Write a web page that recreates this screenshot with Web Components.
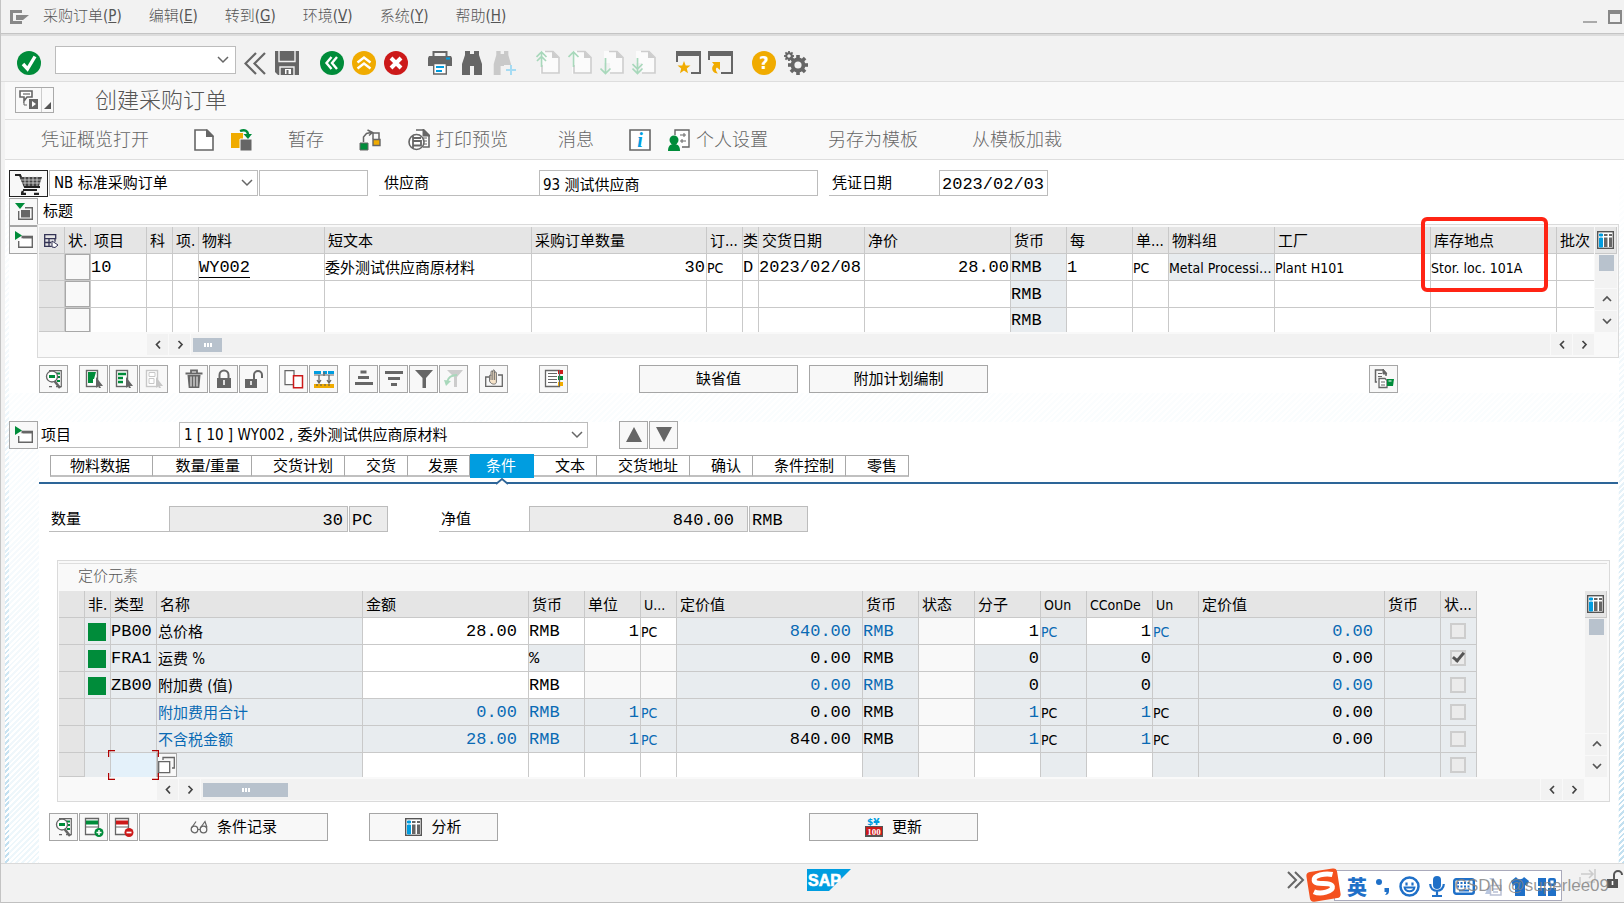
<!DOCTYPE html>
<html lang="zh-CN">
<head>
<meta charset="utf-8">
<title>创建采购订单</title>
<style>
html,body{margin:0;background:#f2f2f2}
body{
  --latin:"DejaVu Sans Condensed","Noto Sans","Noto Sans CJK SC",sans-serif;
  --mono:"Liberation Mono","Noto Sans CJK SC",monospace;
  --line:#c9c9c9;--edge:#a6a6a6;--head:#e5e5e5;--ro:#e8ecef;--blue:#0a6ab4;
  font:15px/20px var(--latin);color:#000
}
</style>
</head>
<body>
<sap-app></sap-app>
<script>
const G='#666', GR='#008c3a', OR='#f0ab00', BL='#009de0', RD='#cc1919';
const page=(c)=>`<path d="M4 1h12l7 7v16H4z" fill="#fbfbfb"/><path d="M9 1.5H17l6 6V23H6V15" fill="none" stroke="${c}" stroke-width="1.6"/><path d="M16 1l7 7h-7z" fill="${c}"/>`;
const binos=(c)=>`<path d="M5 0h5v3h4V0h5v4l3 9v11h-8v-9h-4v9H2V13l3-9z" fill="${c}"/>`;
const gear=(x,y,r,n,w)=>{let s='';for(let i=0;i<n;i++)s+=`<rect x="${x-w/2}" y="${y-r}" width="${w}" height="${r*0.6}" transform="rotate(${i*360/n} ${x} ${y})"/>`;return `<g fill="${G}">${s}</g><circle cx="${x}" cy="${y}" r="${r*0.55}" fill="none" stroke="${G}" stroke-width="${r*0.38}"/>`};
const sheet=(c)=>`<rect x="2.5" y="1.5" width="11" height="16" fill="#fff" stroke="${c}" stroke-width="1.4"/>`;
const cursor=(c)=>`<path d="M12 8l7 9-3 0 1 2-2 0-1-2-2 2z" fill="${c}"/>`;
const grid=`<rect x=".7" y=".7" width="15.6" height="16.6" fill="#fff" stroke="#555" stroke-width="1.4"/><path d="M2.500 3h3v2h-3zM2.500 7h3v9h-3z" fill="${BL}" stroke="${BL}"/><path d="M7 3h3.500v2H7zM12 3h3v2h-3zM7 6.500h3.500V16H7zM12 6.500h3V16h-3z" fill="${G}"/>`;
const loupe=`<path d="M5 1.700h12.300v16H12M5 17.700h3" fill="none" stroke="${G}" stroke-width="1.200"/><path d="M12 4.500h4M12 8h4M13 12h3" stroke="${GR}" stroke-width="2"/><circle cx="8" cy="7.500" r="5.500" fill="#fff" stroke="${G}" stroke-width="1.300"/><path d="M5 7.500h6" stroke="${GR}" stroke-width="3"/><path d="M10.500 12l5.500 7" stroke="${G}" stroke-width="2.600"/>`;
const ICONS={
 menu:[20,14,`<path d="M12 1.500H1.500v11H12" fill="none" stroke="#888" stroke-width="3"/><path d="M6 5h13l-6 5H6z" fill="#888"/>`],
 ok:[24,24,`<circle cx="12" cy="12" r="12" fill="${GR}"/><path d="M6 13l4.500 5L18 5.500" fill="none" stroke="#fff" stroke-width="3.400"/>`],
 chev:[12,8,`<path d="M1 1l5 5 5-5" fill="none" stroke="${G}" stroke-width="1.500"/>`],
 dbl:[24,24,`<path d="M12 2L1.500 12.500 12 23M21 2L10.500 12.500 21 23" fill="none" stroke="${G}" stroke-width="2.200"/>`],
 save:[24,24,`<path d="M0 0h24v24H3l-3-3z" fill="${G}"/><path d="M4 0v10.500h16V0M5 24v-8h14v8" fill="none" stroke="#f2f2f2" stroke-width="1.400"/><path d="M10 18h6v5h-6z" fill="#fff"/><path d="M11.500 19h2v4h-2z" fill="${G}"/>`],
 back:[24,24,`<circle cx="12" cy="12" r="12" fill="${GR}"/><path d="M11.500 6L6.500 12l5 6M17 6l-5 6 5 6" fill="none" stroke="#fff" stroke-width="2.400"/>`],
 up:[24,24,`<circle cx="12" cy="12" r="12" fill="${OR}"/><path d="M5.500 11.500l6.500-5 6.500 5M5.500 17.500l6.500-5 6.500 5" fill="none" stroke="#fff" stroke-width="2.400"/>`],
 stop:[24,24,`<circle cx="12" cy="12" r="12" fill="${RD}"/><path d="M7 7l10 10M17 7L7 17" stroke="#fff" stroke-width="4"/>`],
 print:[24,24,`<path d="M5.500 5V1h13v4" fill="none" stroke="${G}" stroke-width="2"/><path d="M1 5h22l1 2v8h-5v-3H5v3H0V7z" fill="${G}"/><path d="M18 7.500h4" stroke="${BL}" stroke-width="2"/><path d="M5.700 12.500h12.600V23H5.700z" fill="#fff" stroke="${G}" stroke-width="1.400"/><path d="M8 16h8M8 20h6" stroke="${BL}" stroke-width="2"/>`],
 find:[24,24,binos(G)],
 findnext:[26,24,`<g transform="scale(.86 1)">${binos('#c9c9c9')}</g><path d="M12 14h14v10H12z" fill="#f2f2f2"/><path d="M19 14v10M14 19h10" stroke="#a5dbf3" stroke-width="2"/>`],
 first:[24,25,page('#cdcdcd')+`<path d="M5.500 2v15M.500 7l5-5 5 5M1 11l4.500-4.500L10 11" fill="none" stroke="#a8d8bb" stroke-width="1.700"/>`],
 prev:[24,25,page('#cdcdcd')+`<path d="M5.500 1.500V17M.500 7l5-5 5 5" fill="none" stroke="#a8d8bb" stroke-width="1.700"/>`],
 next:[24,25,page('#cdcdcd')+`<path d="M1 13h9v12H1z" fill="#f2f2f2"/><path d="M5.500 8v15.500M.500 18.500l5 5 5-5" fill="none" stroke="#a8d8bb" stroke-width="1.700"/>`],
 last:[24,25,page('#cdcdcd')+`<path d="M1 13h9v12H1z" fill="#f2f2f2"/><path d="M5.500 8v15.500M.500 18.500l5 5 5-5M.500 14l5 5 5-5" fill="none" stroke="#a8d8bb" stroke-width="1.700"/>`],
 newwin:[25,25,`<path d="M0 1h25v5H0z" fill="${G}"/><path d="M1 5v7M24 5v18H15" fill="none" stroke="${G}" stroke-width="2"/><path d="M8 11l1.700 4.400 4.800.200-3.700 3 1.200 4.600L8 20.600l-4 2.600 1.200-4.600-3.700-3 4.800-.200z" fill="${OR}"/>`],
 shortcut:[25,25,`<path d="M0 1h25v5H0z" fill="${G}"/><path d="M1 5v5M24 5v18H13" fill="none" stroke="${G}" stroke-width="2"/><path d="M4 12h8v8l-3-2.500c-2 1-1 4 1 6-5 0-8-5-4-9z" fill="${OR}"/>`],
 help:[24,24,`<circle cx="12" cy="12" r="12" fill="${OR}"/><text x="12" y="18" text-anchor="middle" font-family="DejaVu Sans" font-weight="700" font-size="17" fill="#fff">?</text>`],
 gear:[24,24,gear(14,14,10,8,3.600)+gear(5,5,5,8,1.800)],
 min:[14,14,`<path d="M0 12h14" stroke="#aaa" stroke-width="2"/>`],
 max:[14,14,`<path d="M1 1h12v12H1zM1 3h12" fill="none" stroke="#888" stroke-width="2"/>`],
 service:[20,20,`<path d="M1 2.500V1h12v6H8L5 11 5 7H1z" fill="#fff" stroke="${G}" stroke-width="1.600"/><path d="M4 4h7" stroke="${G}" stroke-width="1.200"/><path d="M10 9h9v10h-9z" fill="${G}"/><path d="M13 11l4 3-4 3z" fill="#fff"/><path d="M5 12v3h3" stroke="${G}" fill="none"/>`],
 corner:[7,7,`<path d="M7 0v7H0z" fill="#555"/>`],
 doc:[20,22,`<path d="M1 1h12l6 6v14H1z" fill="#fff" stroke="${G}" stroke-width="1.600"/><path d="M12 0l8 8h-8z" fill="${G}"/>`],
 copyinto:[22,22,`<path d="M0 4h12v15H0z" fill="${OR}"/><path d="M9 10h12v12H9z" fill="${G}" stroke="#f9f9f9"/><path d="M9 2c5-2 8 0 8 4" fill="none" stroke="${GR}" stroke-width="2.400"/><path d="M12.500 5h8.500l-4 5z" fill="${GR}"/>`],
 check:[22,22,`<path d="M1 14h8v7H1z" fill="${GR}" stroke="${G}"/><path d="M14 10.500h7v6h-7z" fill="${OR}" stroke="${G}" stroke-width="1.400"/><path d="M4.500 13V8L7.500 4.500 12 3.500M8.500 1l5 2.500-3.500 3M14 4h6v6M14 4v6" fill="none" stroke="${G}" stroke-width="1.500"/>`],
 preview:[22,22,`<path d="M8 1h8l5 5v12h-6" fill="#fff" stroke="${G}" stroke-width="1.600"/><path d="M15 0l7 7h-7zM14 9h5M16 12h3M16 15h3" stroke="${G}" fill="${G}"/><circle cx="8.500" cy="13" r="7.500" fill="#fff" stroke="${G}" stroke-width="1.600"/><path d="M5 7v12M5 9h8M5 16.500h8V12H5" fill="none" stroke="${G}" stroke-width="1.800"/>`],
 info:[22,22,`<path d="M1 1h20v20H1z" fill="#fff" stroke="${G}" stroke-width="1.600"/><text x="11" y="18" text-anchor="middle" font-family="Liberation Serif" font-style="italic" font-weight="700" font-size="20" fill="${BL}">i</text>`],
 person:[22,22,`<path d="M7 6V1h14v17h-7" fill="#fff" stroke="${G}" stroke-width="1.400"/><path d="M12 6h6M12 12h6M16 4v4M14 10v4" stroke="${G}"/><circle cx="6" cy="11" r="4.500" fill="${GR}"/><path d="M0 22c0-6 3-7 6-7s6 1 6 7z" fill="${GR}"/>`],
 cart:[28,22,`<path d="M0 2h5l5 12h15M8 17h14" fill="none" stroke="#222" stroke-width="2.200"/><path d="M5 4h22l-3 9H9z" fill="#444"/><path d="M10 3v10M14 3v10M18 3v10M22 3v10M6 7h20M7 10h18" stroke="#ddd" stroke-width=".8"/><path d="M8 18l-1 2M6 21h5M19 21h5" stroke="#222" stroke-width="2.400"/>`],
 fold:[20,20,`<path d="M1 1h10l-5 6z" fill="${GR}"/><path d="M4.700 9v8.300h13.600V5.700H11" fill="none" stroke="${G}" stroke-width="1.400"/><path d="M7 8h9v7.500H7z" fill="${G}"/>`],
 unfold:[20,20,`<path d="M1 1l7 4.500L1 10z" fill="${GR}"/><path d="M4.700 11v6.300h13.600V7.500H9" fill="#fff" stroke="${G}" stroke-width="1.400"/><path d="M7.500 7h11.500" stroke="${G}" stroke-width="2.600"/>`],
 selall:[16,14,`<path d="M.700.700h11v4h-11zM.700 4.700v7.600h7M.700 8.500h6.500M5 4.700v7.600M11 4.700v3" fill="none" stroke="#335" stroke-width="1.300"/><path d="M8 7l6 4-3 2.500-3-.500z" fill="#fff" stroke="#335"/>`],
 grid:[17,18,grid],
 loupe:[20,20,loupe],
 selpage:[20,20,sheet(G)+`<path d="M4 3h8l-2 7H9v4H4z" fill="${GR}"/>`+cursor(G)],
 sellist:[20,20,sheet(G)+`<path d="M4 5h8M4 9h5M4 13h5" stroke="${GR}" stroke-width="2.400"/>`+cursor(G)],
 desel:[20,20,sheet('#c8c8c8')+`<path d="M5 3.500h6v4H5zM5 9.500h5v5H5z" fill="none" stroke="#c8c8c8"/>`+cursor('#c8c8c8')],
 trash:[20,20,`<path d="M1.500 4.500h17M7 4V1.500h6V4" fill="none" stroke="${G}" stroke-width="1.800"/><path d="M3.500 6h13l-1.200 13H4.700z" fill="${G}"/><path d="M7 7.500v10M10 7.500v10M13 7.500v10" stroke="#fff"/>`],
 lock:[20,20,`<path d="M3 9h14v10H3z" fill="${G}"/><path d="M5.500 9V6a4.500 4.500 0 019 0v3" fill="none" stroke="${G}" stroke-width="2"/><path d="M10 11v5" stroke="#fff" stroke-width="1.600"/>`],
 unlock:[20,20,`<path d="M1 10h12v9H1z" fill="${G}"/><path d="M10 10V6a4 4 0 018 0v3" fill="none" stroke="${G}" stroke-width="2"/><path d="M7 12v4" stroke="#fff" stroke-width="1.600"/>`],
 dup:[20,20,`<path d="M1 1.700h9v14H1z" fill="#fff" stroke="${G}" stroke-width="1.200"/><path d="M9.500 6.700h9v12h-9z" fill="#fff" stroke="${RD}" stroke-width="1.500"/>`],
 ruler:[20,20,`<path d="M0 2h7v3H0zM9 2h4v3H9zM14 2h6v3h-6z" fill="${BL}"/><path d="M0 6h20" stroke="${G}"/><path d="M5 6v8M3 11l2 3 2-3M15 6v8M13 11l2 3 2-3M10 3v4" stroke="${G}" fill="none" stroke-width="1.300"/><path d="M0 15h20v4H0z" fill="${OR}"/><path d="M3 15v2M7 15v2M11 15v2M15 15v2" stroke="#555"/>`],
 asc:[20,20,`<path d="M6.500 3h6M4 8.500h11M1 14.500h18" stroke="${G}" stroke-width="3"/>`],
 desc:[20,20,`<path d="M1 3.500h18M4 9.500h12M7 15.500h6" stroke="${G}" stroke-width="3"/>`],
 filter:[20,20,`<path d="M1 1h18l-7 8v10H8.500V9z" fill="${G}"/><path d="M14 8a3 3 0 003-4" stroke="#fff" fill="none"/>`],
 nofilter:[20,20,`<path d="M3 1h16l-6 7v10h-3V8z" fill="#ccc"/><path d="M13 6c-6 0-9 3-10 7" fill="none" stroke="#a8d8bb" stroke-width="2"/><path d="M0 11l7 1-5 5z" fill="#a8d8bb"/>`],
 attach:[20,20,`<path d="M5 8H1.700v9.300h16.600V6H14" fill="none" stroke="${G}" stroke-width="1.300"/><path d="M5.500 12V7c0-1.500 1.500-1.500 1.500 0V3c0-1.500 1.800-1.500 1.800 0V2c0-1.500 1.800-1.500 1.800 0v2c0-1.500 1.800-1.500 1.800 0v9c0 3-5.400 3-6.900-1zM7 7v4M8.800 3v8M10.600 4v7" fill="#f6e3c8" stroke="${G}" stroke-width=".9"/>`],
 book:[20,20,`<path d="M1.500 1.500h14v16h-14z" fill="#fff" stroke="${G}" stroke-width="1.300"/><path d="M4 4.500h9M4 7.500h9M4 10.500h9M4 13.500h9" stroke="${G}"/><path d="M14 1h5v4h-5z" fill="${RD}"/><path d="M14 7h5v4h-5z" fill="${GR}"/><path d="M14 13h5v4h-5z" fill="${OR}"/><path d="M15.500 1v17" stroke="${G}"/>`],
 docs:[20,20,`<path d="M3 13H1.500V1H9l3 3v3" fill="none" stroke="${G}" stroke-width="1.500"/><path d="M4 4.500h4M4 7.500h4" stroke="${G}"/><path d="M5 9.500h6l2 2v7H5z" fill="#fff" stroke="${G}" stroke-width="1.300"/><path d="M7 13h4M7 16h4M9 0l4 5H9z" stroke="${G}" fill="${G}"/><path d="M13 10h7l-1 7h-6z" fill="${GR}"/><path d="M14.500 12h3" stroke="#fff"/>`],
 triup:[18,16,`<path d="M9 0l8 15H1z" fill="${G}"/>`],
 tridown:[18,16,`<path d="M1 0h16L9 15z" fill="${G}"/>`],
 match:[18,18,`<path d="M5 4V1.500h11.300V12H14" fill="none" stroke="${G}" stroke-width="1.300"/><path d="M.700 5.700h11v11H.700z" fill="#fff" stroke="${G}" stroke-width="1.300"/>`],
 rowadd:[20,20,`<path d="M12 17.500H1.500V1.500h13V11" fill="#fff" stroke="${G}" stroke-width="1.300"/><path d="M2 5.500h12" stroke="${GR}" stroke-width="4"/><path d="M2 10h12" stroke="${G}"/><circle cx="15" cy="15.500" r="4.500" fill="${GR}"/><path d="M15 13v5M12.500 15.500h5" stroke="#fff" stroke-width="1.500"/>`],
 rowdel:[20,20,`<path d="M12 17.500H1.500V1.500h13V11" fill="#fff" stroke="${G}" stroke-width="1.300"/><path d="M2 5.500h12" stroke="${RD}" stroke-width="4"/><path d="M2 10h12" stroke="${G}"/><circle cx="15" cy="15.500" r="4.500" fill="${RD}"/><path d="M12.500 15.500h5" stroke="#fff" stroke-width="1.700"/>`],
 glasses:[18,14,`<circle cx="4.500" cy="9.500" r="3.300" fill="none" stroke="${G}" stroke-width="1.300"/><circle cx="13.500" cy="9.500" r="3.300" fill="none" stroke="${G}" stroke-width="1.300"/><path d="M1.500 8L6 1.500M10.300 8L15 1.500l2 6M8 9.500h2" fill="none" stroke="${G}" stroke-width="1.200"/>`],
 price:[18,20,`<text x="2" y="8" font-family="DejaVu Sans" font-weight="700" font-size="9" fill="${BL}">$¥</text><path d="M0 9h18v11H0z" fill="#555"/><path d="M1 10h16v8H1z" fill="${RD}"/><text x="9" y="17.500" text-anchor="middle" font-family="Liberation Serif" font-weight="700" font-size="9" fill="#fff">100</text>`],
 left:[21,21,`<path d="M13 7L9.500 10.500 13 14.500" fill="none" stroke="#444" stroke-width="1.700"/>`],
 right:[21,21,`<path d="M9.500 7l3.500 3.500-3.500 4" fill="none" stroke="#444" stroke-width="1.700"/>`],
 sup:[21,21,`<path d="M7 12l4-4 4 4" fill="none" stroke="#555" stroke-width="1.700"/>`],
 sdown:[21,21,`<path d="M7 8l4 4 4-4" fill="none" stroke="#555" stroke-width="1.700"/>`],
 more:[18,18,`<path d="M1 1l8 8-8 8M8 1l8 8-8 8" fill="none" stroke="${G}" stroke-width="2"/>`],
 sap:[44,22,`<path d="M0 0h44L22 22H0z" fill="${BL}"/><text x="1" y="17" font-family="Liberation Sans" font-weight="700" font-size="16" fill="#fff" stroke="#fff" stroke-width=".6">SAP</text>`],
 sogou:[36,36,`<g transform="rotate(-9 18 18)"><rect x="2" y="3" width="31" height="30" rx="4" fill="#f4511e"/><path d="M28 9c-7-3-19-2-19 3 0 6 17 3 17 9 0 5-13 6-19 2" fill="none" stroke="#fff" stroke-width="5"/></g>`],
 punct:[14,20,`<circle cx="3" cy="5" r="3" fill="#1f70c8"/><path d="M8.500 11h4.500v3c0 3-2 4-4 4 1-1 1.500-2 1.500-3h-2z" fill="#1f70c8"/>`],
 smile:[21,21,`<circle cx="10.500" cy="10.500" r="9" fill="none" stroke="#1f70c8" stroke-width="2.500"/><path d="M7.500 6.500v3M13.500 6.500v3" stroke="#1f70c8" stroke-width="2.200"/><path d="M5.500 11.500c1 5 9 5 10 0z" fill="none" stroke="#1f70c8" stroke-width="1.800"/>`],
 mic:[16,21,`<rect x="4" y="0" width="8" height="13" rx="4" fill="#1f70c8"/><path d="M1.200 8c0 9 13.600 9 13.600 0M8 15v4M3 20h10" fill="none" stroke="#1f70c8" stroke-width="2.200"/>`],
 keys:[22,17,`<rect x="1.200" y="1.200" width="19.600" height="14.600" rx="2" fill="#fff" stroke="#1f70c8" stroke-width="2.400"/><path d="M4 5h14M4 8.500h14" stroke="#1f70c8" stroke-width="2" stroke-dasharray="2 1.500"/><path d="M6 12.500h10" stroke="#1f70c8" stroke-width="2"/>`],
 card:[18,19,`<path d="M5 1l3 3v5h-3l-4 8h9V1z" fill="#b9c6de"/><path d="M6.500 8.500h10.500V18H6.500z" fill="#fff" stroke="#b9c0d4" stroke-width="1.500"/><path d="M9 12h5M9 15h5" stroke="#b9c0d4" stroke-width="1.500"/>`],
 shirt:[18,19,`<path d="M5 0c2 3 6 3 8 0l5 4-2 5-2-1v11H4V8L2 9 0 4z" fill="#1f70c8"/>`],
 apps:[18,19,`<path d="M0 1h8v8H0zM0 11h8v8H0zM10 11h8v8h-8z" fill="#1f70c8"/><rect x="11.200" y="2.200" width="5.600" height="5.600" rx="1" fill="#fff" stroke="#1f70c8" stroke-width="2.400"/>`],
 tab:[17,17,`<path d="M2 5h12M10 1l4 4-4 4M16 0v10M1 8v8M16 13H6" fill="none" stroke="#ccc" stroke-width="1.600"/>`],
 padlock:[18,20,`<path d="M1 10h11v9H1z" fill="#555"/><path d="M8 10V6a4 4 0 018 0" fill="none" stroke="#555" stroke-width="2"/><path d="M6.500 12v4" stroke="#fff" stroke-width="1.600"/>`]
};
const define=(tag,html,after)=>customElements.define(tag,class extends HTMLElement{
  connectedCallback(){
    if(this.shadowRoot)return;
    const root=this.attachShadow({mode:'open'});
    const t=document.createElement('template');
    t.innerHTML=typeof html==='function'?html(this):html;
    root.append(t.content.cloneNode(true));
    if(after)after(this,root);
  }
});
const ico=n=>`<ui-icon name="${n}"></ui-icon>`;

define('ui-icon',el=>{const [w,h,m]=ICONS[el.getAttribute('name')];
  return `<style>:host{display:inline-flex;flex:none}svg{display:block}</style><svg width="${w}" height="${h}" viewBox="0 0 ${w} ${h}" aria-hidden="true">${m}</svg>`});

/* Framed push button, with an icon, a caption or both */
define('push-button',el=>`<style>
:host{display:inline-flex;flex:none;width:29px;height:28px}
button{flex:1;box-sizing:border-box;display:flex;align-items:center;justify-content:center;gap:9px;padding:0;margin:0;border:1px solid var(--edge);background:#f8f8f8;color:#000;font:15px/20px var(--latin)}
:host([dark]) button{border:1px solid #222}
</style><button type="button" aria-label="${el.getAttribute('label')||''}">${el.hasAttribute('icon')?ico(el.getAttribute('icon')):''}<slot></slot></button>`);

/* Flat toolbar button */
define('tool-button',el=>`<style>
:host{display:inline-flex;flex:none}
button{display:flex;align-items:center;gap:6px;padding:0;margin:0;border:0;background:none;color:#666;font:300 18px/24px var(--latin)}
</style><button type="button" aria-label="${el.getAttribute('label')||''}">${el.hasAttribute('icon')?ico(el.getAttribute('icon')):''}<slot></slot></button>`);

/* Underlined label joined to one text box */
define('form-field',el=>{const a=n=>el.getAttribute(n)||'';return `<style>
:host{display:flex;flex:none;height:26px}
label{box-sizing:border-box;width:var(--lw);border-bottom:1px solid #bcbcbc;padding:0 4px 0 var(--lp,5px);line-height:27px;white-space:nowrap}
input{box-sizing:border-box;width:var(--iw);height:26px;margin:0;padding:0 3px;border:1px solid #bcbcbc;background:#fff;color:#000;font:15px/20px var(--latin);border-radius:0}
:host([mono]) input{font:17px/20px var(--mono);padding:2px 2px 0}
:host([ro]) input{background:#ebebeb}
:host([right]) input{text-align:right;padding-right:var(--rp,4px)}
</style>${el.hasAttribute('label')?`<label for="f">${a('label')}</label>`:''}<input id="f" type="text" value="${a('value')}" aria-label="${a('label')||a('name')}" ${el.hasAttribute('ro')?'readonly':''}>`});

define('drop-down',el=>`<style>
:host{display:block;position:relative;flex:none;height:26px}
select{appearance:none;box-sizing:border-box;width:100%;height:26px;margin:0;padding:0 24px 0 4px;border:1px solid #bcbcbc;border-radius:0;background:#fff;color:#000;font:15px/20px var(--latin)}
ui-icon{position:absolute;right:5px;top:9px;pointer-events:none}
</style><select aria-label="${el.getAttribute('label')}"><option>${el.getAttribute('value')}</option></select>${ico('chev')}`);

define('menu-bar',()=>{
  const items=[['采购订单','P'],['编辑','E'],['转到','G'],['环境','V'],['系统','Y'],['帮助','H']];
  return `<style>
:host{display:flex;align-items:center;height:33px;padding:0 2px 0 9px;border-bottom:1px solid #c4c4c4;box-shadow:0 2px #dcdcdc;background:#f2f2f2;margin-bottom:2px}
nav{display:flex;gap:27px;margin:0 0 2px 13px;flex:1}
button{border:0;background:none;padding:0;color:#555;font:300 15px/20px var(--latin);white-space:nowrap}
ui-icon{margin-left:11px}ui-icon:first-of-type{margin-left:0}
</style>${ico('menu')}<nav>${items.map(([t,k])=>`<button type="button">${t}(<u>${k}</u>)</button>`).join('')}</nav>${ico('min')}${ico('max')}`});

define('system-bar',()=>{
  const groups=[['back','up','stop'],['print','find','findnext'],['first','prev','next','last'],['newwin','shortcut'],['help','gear']];
  return `<style>
:host{display:flex;align-items:center;height:37px;padding:8px 0 0 16px;border-bottom:1px solid #dedede;background:#f2f2f2}
.cmd{position:relative;width:181px;margin:0 8px 6px 14px;height:28px}
.cmd input{box-sizing:border-box;width:100%;height:28px;border:1px solid #bcbcbc;margin:0;padding:0 4px;background:#fff;border-radius:0;font:15px var(--latin)}
.cmd ui-icon{position:absolute;right:7px;top:10px}
tool-button{width:24px}
.g{display:flex;gap:8px;margin-left:20px}.s{margin:0 1px 0 7px}
</style><tool-button icon="ok" label="Enter"></tool-button><div class="cmd"><input type="text" aria-label="Command">${ico('chev')}</div><tool-button icon="dbl" label="Hide"></tool-button><tool-button class="s" icon="save" label="Save"></tool-button>${groups.map(g=>`<div class="g">${g.map(i=>`<tool-button icon="${i}" label="${i}"></tool-button>`).join('')}</div>`).join('')}`});

define('title-bar',()=>`<style>
:host{display:flex;align-items:center;height:37px;margin-left:4px;padding-left:10px;background:#f9f9f9;border-bottom:1px solid #dedede}
.b{display:flex;height:26px;box-sizing:border-box;border:1px solid #aaa;margin-bottom:2px}
button{border:0;padding:0;margin:0;background:#f9f9f9;width:25px;display:flex;align-items:center;justify-content:center}
button+button{width:12px;border-left:1px solid #ccc;align-items:flex-end;padding-bottom:3px}
h1{margin:0 0 0 41px;font:300 22px/30px var(--latin);color:#555}
</style><div class="b"><button type="button" aria-label="Services">${ico('service')}</button><button type="button" aria-label="More">${ico('corner')}</button></div><h1>创建采购订单</h1>`);

define('app-bar',()=>`<style>
:host{display:flex;align-items:center;height:39px;margin-left:4px;padding-left:36px;background:#f9f9f9;border-bottom:1px solid #dedede}
.v{margin-left:45px}.w{margin-left:50px}.m{margin-left:35px}.n{margin-left:17px}
</style><tool-button>凭证概览打开</tool-button><tool-button class="v" icon="doc" label="New"></tool-button><tool-button class="n" icon="copyinto" label="Copy"></tool-button><tool-button class="m">暂存</tool-button><tool-button class="m" icon="check" label="Check"></tool-button><tool-button style="margin-left:27px" icon="preview">打印预览</tool-button><tool-button class="w">消息</tool-button><tool-button class="m" icon="info" label="Info"></tool-button><tool-button class="n" icon="person">个人设置</tool-button><tool-button style="margin-left:60px">另存为模板</tool-button><tool-button style="margin-left:54px">从模板加裁</tool-button>`);

define('h-scroll',`<style>
:host{display:flex;gap:1px;height:21px;background:#f9f9f9}
button{border:0;padding:0;margin:0;width:21px;height:21px;background:#f2f2f2}
.t{flex:1;background:#f2f2f2;display:flex;align-items:center}
.k{width:var(--thumb);height:14px;margin-left:2px;background:#b8c2cd;display:flex;gap:1px;align-items:center;justify-content:center}
.k i{width:2px;height:4px;background:#fff}
</style><button type="button" aria-label="left">${ico('left')}</button><button type="button" aria-label="right">${ico('right')}</button><div class="t"><div class="k"><i></i><i></i><i></i></div></div><button type="button" aria-label="page left">${ico('left')}</button><button type="button" aria-label="page right">${ico('right')}</button>`);

define('v-scroll',`<style>
:host{display:flex;flex-direction:column;gap:1px;width:22px}
button{border:0;padding:0;margin:0;width:22px;height:21px;background:#f2f2f2;display:flex;justify-content:center}
.c{height:27px;box-sizing:border-box;background:#e5e5e5;border-bottom:1px solid var(--line);border-right:1px solid var(--line);align-items:center;margin-bottom:-1px}
.t{flex:1;background:#f2f2f2}.k{width:15px;height:16px;margin:1px 0 0 4px;background:#b8c2cd}
</style><button class="c" type="button" aria-label="columns">${ico('grid')}</button><div class="t"><div class="k"></div></div><button type="button" aria-label="up">${ico('sup')}</button><button type="button" aria-label="down">${ico('sdown')}</button>`);

const TABLE_CSS=`
table{table-layout:fixed;border-collapse:separate;border-spacing:0}
th,td{box-sizing:border-box;height:27px;padding:1px 0 0;border-right:1px solid var(--line);border-bottom:1px solid var(--line);text-align:left;font-weight:400;font-size:15px;line-height:20px;white-space:nowrap;background:#fff}
th{background:var(--head);padding-left:3px}
th span{display:block;overflow:hidden}
tbody tr:last-child td{height:24px;border-bottom:0}
td.h{background:var(--head)}tbody tr:last-child td.h{border-bottom:1px solid var(--line)}
.m{font:17px/20px var(--mono)}td.m{padding-top:2px}.l{font-size:14px}.r{text-align:right;padding-right:1px}.a{text-align:right;padding-right:11px}
.g{background:var(--ro)}.f{background:#f9f9f9}.b{color:var(--blue)}`;
const cols=a=>`<colgroup>${a.map(w=>w?`<col style="width:${w}px">`:'<col>').join('')}</colgroup>`;
const body=rows=>rows.map(r=>`<tr>${r.map(c=>{const [k,v='']=c.split('|');return `<td class="${k}">${v}</td>`}).join('')}</tr>`).join('');

define('item-table',()=>{
  const heads=['状.','项目','科','项.','物料','短文本','采购订单数量','订...','类','交货日期','净价','货币','每','单...','物料组','工厂'];
  const box='s|<button type="button" aria-label="status"></button>';
  const blank=['h',box,'','','','','','','','','','','m g|RMB','','','','','',''];
  const rows=[['h',box,'m|10','','','m|<a href="#">WY002</a>','|委外测试供应商原材料','m r|30','l|PC','m|D','m|2023/02/08','m r|28.00','m g|RMB','m|1','l|PC','l g|Metal Processi…','l|Plant H101','l|Stor. loc. 101A',''],blank,blank];
  return `<style>
:host{display:grid;grid-template-columns:minmax(0,1fr) 22px;gap:2px 1px;padding:2px 1px 2px;border:1px solid #dadada;background:#f9f9f9}
${TABLE_CSS}
table{width:100%}
th:last-child,td:last-child{border-right:0}
th.x{padding-left:0}
th.i{padding:3px 0 0 5px;line-height:14px}
td.s{padding:0}td.s button{display:block;box-sizing:border-box;width:100%;height:26px;margin:0;border:1px solid #a8a8a8;background:#f9f9f9}
tr:last-child td.s button{height:24px}
a{color:#000;text-decoration:none;border-bottom:1px solid}
.mark{position:relative}
.mark i{position:absolute;z-index:2;left:-10px;top:-10px;width:127px;height:75px;box-sizing:border-box;border:4px solid #ff2414;border-radius:6px}
h-scroll{--thumb:29px;margin-left:108px}
</style><table>${cols([26,26,56,26,26,126,207,175,36,16,106,146,56,66,36,106,156,126,0])}<thead><tr><th class="i">${ico('selall')}</th>${heads.map(h=>`<th${h==='类'?' class="x"':''}><span>${h}</span></th>`).join('')}<th class="mark">库存地点<i></i></th><th>批次</th></tr></thead><tbody>${body(rows)}</tbody></table><v-scroll></v-scroll><h-scroll></h-scroll>`});

define('price-table',()=>{
  const heads=['','非.','类型','名称','金额','货币','单位','U...','定价值','货币','状态','分子','OUn','CConDe','Un','定价值','货币','状...'];
  const sq='g c|<i class="q"></i>', cb='g c|<input type="checkbox" disabled aria-label="统计">', cc='g c|<input type="checkbox" disabled checked aria-label="统计">';
  const rows=[
   ['h',sq,'m g|PB00','g n|总价格','m a|28.00','m|RMB','m r|1','l|PC','m a g b|840.00','m g b|RMB','f','m r|1','l g b|PC','m r|1','l g b|PC','m a g b|0.00','g',cb],
   ['h',sq,'m g|FRA1','g n|运费 %','','m g|%','f','f','m a g|0.00','m g|RMB','f','m r g|0','g','m r g|0','g','m a g|0.00','g',cc],
   ['h',sq,'m g|ZB00','g n|附加费 (值)','','m|RMB','f','f','m a g b|0.00','m g b|RMB','f','m r g|0','g','m r g|0','g','m a g b|0.00','g',cb],
   ['h','g','g','g n b|附加费用合计','m a g b|0.00','m g b|RMB','m r g b|1','l g b|PC','m a g|0.00','m g|RMB','f','m r g b|1','l g|PC','m r g b|1','l g|PC','m a g|0.00','g',cb],
   ['h','g','g','g n b|不含税金额','m a g b|28.00','m g b|RMB','m r g b|1','l g b|PC','m a g|840.00','m g|RMB','f','m r g b|1','l g|PC','m r g b|1','l g|PC','m a g|0.00','g',cb],
   ['h','g','g e|<input type="text" aria-label="类型"><svg width="51" height="30" viewBox="0 0 51 30"><path d="M.5 7V.5H7M44 .5h6.500V7M50.500 23v6.500H44M7 29.500H.500V23" fill="none" stroke="#b00000" stroke-width="1.400"/></svg>','g z|<button type="button" class="p" aria-label="match">'+ico('match')+'</button>','','','','','','g','f','','g','','g','g','g',cb]];
  return `<style>
:host{display:grid;grid-template-columns:minmax(0,1fr) 22px;gap:2px 1px;padding:2px 2px 1px 1px;border:1px solid #dadada;background:#f9f9f9}
h3{grid-column:1/-1;margin:0 0 -2px;padding-left:19px;box-sizing:border-box;height:28px;border-top:1px solid #dedede;font:300 15px/25px var(--latin);color:#555}
${TABLE_CSS}
table{width:1418px}
.n{padding-left:1px}td.c{text-align:center;padding:0}td.z{padding:0}
.q{display:block;width:18px;height:18px;margin:2px 0 0 3px;background:#008c3a}
td input[type=checkbox]{appearance:none;position:relative;display:block;box-sizing:border-box;width:16px;height:16px;margin:0 auto 0 9px;border:2px solid #cdcdcd;background:#ebebeb}
td input[type=checkbox]:checked::after{content:"";position:absolute;left:3px;top:-2px;width:4px;height:9px;border:solid #555;border-width:0 3px 3px 0;transform:rotate(40deg)}
td.e{position:relative;padding:0}
.e input{display:block;box-sizing:border-box;width:100%;height:24px;margin:0;padding:0 2px;border:0;background:#e4f1fa;font:17px/20px var(--mono)}
.e svg{position:absolute;left:-3px;top:-3px;z-index:1}
.p{display:flex;align-items:center;justify-content:center;box-sizing:border-box;width:20px;height:24px;padding:0;margin:0;border:1px solid var(--edge);background:#f8f8f8}
h-scroll{--thumb:85px;margin-left:98px}
</style><h3>定价元素</h3><div class="w"><table>${cols([26,26,46,206,166,56,56,36,186,56,56,66,46,66,46,186,56,36])}<thead><tr>${heads.map(h=>`<th${/[A-Z]/.test(h)?' class="l"':''}><span>${h}</span></th>`).join('')}</tr></thead><tbody>${body(rows)}</tbody></table></div><v-scroll></v-scroll><h-scroll></h-scroll>`});

define('tab-strip',()=>{
  const tabs=[['物料数据',103],['数量/重量',99],['交货计划',93],['交货',63],['发票',62],['条件',64],['文本',63],['交货地址',93],['确认',63],['条件控制',93],['零售',63]];
  return `<style>
:host{display:flex;height:30px;box-sizing:border-box;padding-left:11px;border-bottom:2px solid #2d6598}
button{box-sizing:border-box;height:22px;margin:1px 0 0;padding:0 11px 0 0;border:solid #a8a8a8;border-width:1px 1px 2px 0;border-bottom-color:#c0c0c0;background:#fff;color:#000;font:15px/18px var(--latin);text-align:right;white-space:nowrap}
button:first-of-type{border-left-width:1px;padding-right:22px}
button.on{position:relative;height:24px;margin-top:0;padding-right:18px;border:0;background:#009de0;color:#fff;line-height:24px}
.on svg{position:absolute;left:25px;top:24px}
</style>${tabs.map(([t,w])=>`<button type="button" role="tab" style="width:${w}px"${t==='条件'?' class="on"':''}>${t}${t==='条件'?'<svg width="14" height="7" viewBox="0 0 14 7" aria-hidden="true"><path d="M1 5h12v2H1z" fill="#fff"/><path d="M1 6L7 1l6 5" fill="#fff" stroke="#2d6598" stroke-width="1.800"/></svg>':''}</button>`).join('')}`});

define('order-header',()=>`<style>
:host{display:grid;grid-template-columns:28px minmax(0,1fr);background:#fff;padding-top:10px}
.row{grid-column:1/-1;display:flex;height:28px}
.side{display:flex;flex-direction:column}
.cap{height:26px;line-height:26px;padding-left:6px}
.tools{display:flex;height:28px;margin:7px 0 0 2px;gap:1px}
.gap{margin-left:10px}
form-field+form-field{margin-left:11px}
</style><div class="row"><push-button dark icon="cart" label="Order" style="width:39px;height:27px"></push-button><drop-down label="订单类型" value="NB 标准采购订单" style="width:209px;margin:0 1px"></drop-down><form-field name="订单" style="--iw:109px"></form-field><form-field label="供应商" value="93 测试供应商" style="--lw:160px;--iw:279px"></form-field><form-field mono label="凭证日期" value="2023/02/03" style="--lw:110px;--iw:109px;--lp:3px"></form-field></div>
<div class="side"><push-button icon="fold" label="Header"></push-button><push-button icon="unfold" label="Items"></push-button></div>
<div><div class="cap">标题</div><item-table></item-table>
<div class="tools">${[['loupe'],['selpage',1],['sellist'],['desel'],['trash',1],['lock'],['unlock'],['dup',1],['ruler'],['asc',1],['desc'],['filter'],['nofilter'],['attach',1]].map(([n,g])=>`<push-button icon="${n}" label="${n}"${g?' class="gap"':''}></push-button>`).join('')}<push-button icon="book" label="book" style="margin-left:30px"></push-button><push-button style="width:159px;margin-left:70px">缺省值</push-button><push-button class="gap" style="width:179px">附加计划编制</push-button><push-button icon="docs" label="docs" style="margin-left:380px"></push-button></div></div>`);

define('order-item',()=>`<style>
:host{display:grid;grid-template-columns:30px minmax(0,1fr);flex:1}
.main{background:#fff;margin-right:1px}
.row{display:flex;height:26px}
.row label{box-sizing:border-box;width:140px;padding-left:2px;line-height:26px;border-bottom:1px solid #bcbcbc}
.nav{display:flex;gap:1px;margin:-1px 0 0 31px}
tab-strip{margin-top:6px}
.vals{display:flex;margin:22px 0 0 10px}
form-field+form-field{margin-left:1px}
price-table{margin:28px 8px 0 18px}
.tools{display:flex;gap:1px;margin:11px 0 20px 10px}
</style><div><push-button icon="unfold" label="Item" style="margin-top:-1px"></push-button></div>
<div class="main"><div class="row"><label>项目</label><drop-down label="项目" value="1 [ 10 ] WY002 , 委外测试供应商原材料" style="width:409px"></drop-down><div class="nav"><push-button icon="triup" label="previous"></push-button><push-button icon="tridown" label="next"></push-button></div></div>
<tab-strip></tab-strip>
<div class="vals"><form-field mono ro right label="数量" value="30" style="--lw:120px;--iw:179px;--lp:2px"></form-field><form-field mono ro name="单位" value="PC" style="--iw:39px"></form-field><form-field mono ro right label="净值" value="840.00" style="--lw:90px;--iw:219px;--lp:2px;--rp:13px;margin-left:51px"></form-field><form-field mono ro name="货币" value="RMB" style="--iw:59px"></form-field></div>
<price-table></price-table>
<div class="tools"><push-button icon="loupe" label="detail"></push-button><push-button icon="rowadd" label="insert"></push-button><push-button icon="rowdel" label="delete"></push-button><push-button icon="glasses" style="width:189px">条件记录</push-button><push-button icon="grid" style="width:129px;margin-left:40px">分析</push-button><push-button icon="price" style="width:169px;margin-left:310px">更新</push-button></div></div>`);

define('status-bar',()=>`<style>
:host{display:flex;position:relative;height:38px;border-top:1px solid #dadada;border-bottom:1px solid #c0c0c0;background:#f2f2f2;padding-left:32px}
.logo{margin:5px auto 0}
.more{position:absolute;right:319px;top:7px}
.end{position:absolute;right:0;top:5px;display:flex;gap:10px}
.ime{position:absolute;right:62px;top:6px;width:228px;box-sizing:border-box;height:31px;border:1px solid #aab;background:#fff;display:flex;align-items:center;padding:2px 5px 0 12px;justify-content:space-between}
.ime b{font:900 20px/24px "Noto Sans CJK SC",sans-serif;color:#1f70c8}
.sg{position:absolute;right:282px;top:3px}
.wm{position:absolute;right:15px;top:12px;font:17px/20px "Liberation Sans",sans-serif;color:#808080d0;white-space:nowrap}
</style><ui-icon class="logo" name="sap"></ui-icon><ui-icon class="more" name="more"></ui-icon><div class="ime"><b>英</b>${['punct','smile','mic','keys','card','shirt','apps'].map(ico).join('')}</div><ui-icon class="sg" name="sogou"></ui-icon><div class="end">${ico('tab')}${ico('padlock')}</div><span class="wm">CSDN @superlee09</span>`);

define('sap-app',()=>`<style>
:host{display:flex;flex-direction:column;min-height:100vh;box-sizing:border-box;border-left:1px solid #c4c4c4}
main{flex:1;display:flex;flex-direction:column;position:relative;margin-left:4px;padding:0 5px 0 4px;
 background:linear-gradient(#fff 0,#fffc 30%,#fff0 90%),repeating-linear-gradient(135deg,#c3e0f0 0 2px,#fff 2px 4px)}
.in{flex:1;display:flex;flex-direction:column;background:#ffffffb8}
order-item{margin-top:29px}
</style><menu-bar></menu-bar><system-bar></system-bar><title-bar></title-bar><app-bar></app-bar><main><div class="in"><order-header></order-header><order-item></order-item></div></main><status-bar></status-bar>`);
</script>
</body>
</html>
